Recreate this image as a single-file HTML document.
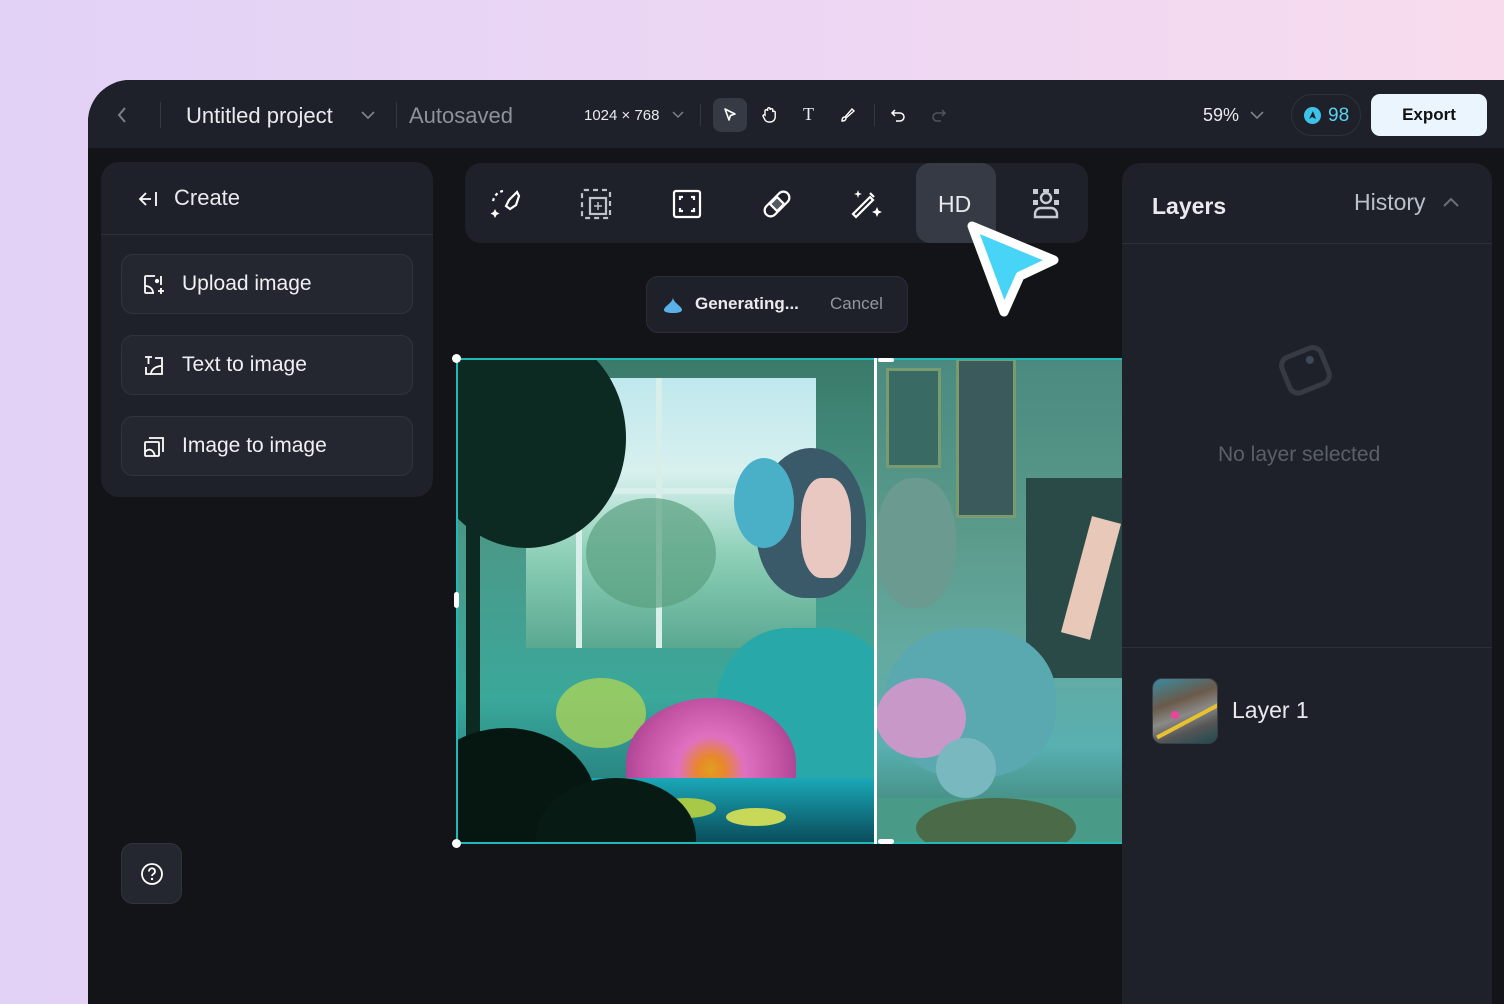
<!DOCTYPE html>
<html><head><meta charset="utf-8"><style>
*{box-sizing:border-box;margin:0;padding:0}
body{width:1504px;height:1004px;overflow:hidden;font-family:"Liberation Sans",sans-serif;background:linear-gradient(90deg,#e2d2f6 0%,#ecd6f4 50%,#f8dcee 100%);position:relative}
.app{position:absolute;left:88px;top:80px;width:1416px;height:924px;background:#131418;border-top-left-radius:42px;overflow:hidden}
.top{position:absolute;left:0;top:0;width:100%;height:68px;background:#1e2129}
.t{position:absolute;color:#e8eaee;white-space:nowrap}
.panel{position:absolute;background:#1e2129;border-radius:18px}
.btn{position:absolute;left:20px;width:292px;height:60px;border:1px solid #30343d;background:#242730;border-radius:12px;color:#eef0f3;font-size:21px;padding-left:60px;line-height:58px}
.btn svg{position:absolute;left:20px;top:18px}
.ico{position:absolute;top:24px}
.a{position:absolute}
</style></head><body>
<div class="app">
 <div class="top">
  <svg style="position:absolute;left:28px;top:26px" width="12" height="18" viewBox="0 0 12 18"><path d="M9 2L3 9l6 7" stroke="#7b808a" stroke-width="2" fill="none"/></svg>
  <div style="position:absolute;left:72px;top:22px;width:1px;height:26px;background:#343842"></div>
  <div class="t" style="left:98px;top:23px;font-size:22px">Untitled project</div>
  <svg style="position:absolute;left:272px;top:30px" width="16" height="10"><path d="M2 2l6 6 6-6" stroke="#7b808a" stroke-width="1.8" fill="none"/></svg>
  <div style="position:absolute;left:308px;top:22px;width:1px;height:26px;background:#343842"></div>
  <div class="t" style="left:321px;top:23px;font-size:22px;color:#8c919b">Autosaved</div>
  <div class="t" style="left:496px;top:27px;font-size:15px">1024 × 768</div>
  <svg style="position:absolute;left:584px;top:31px" width="12" height="8"><path d="M1 1l5 5 5-5" stroke="#7b808a" stroke-width="1.5" fill="none"/></svg>
  <div style="position:absolute;left:612px;top:24px;width:1px;height:22px;background:#343842"></div>
  <div style="position:absolute;left:625px;top:18px;width:34px;height:34px;background:#363a44;border-radius:8px"></div>
  <svg style="position:absolute;left:634px;top:27px" width="16" height="16"><path d="M3 2l10 5-4.5 1.5L7 13z" stroke="#fff" stroke-width="1.6" fill="none" stroke-linejoin="round"/></svg>
  <svg style="position:absolute;left:673px;top:26px" width="16" height="18"><path d="M4 9V5a1.3 1.3 0 012.6 0V3a1.3 1.3 0 012.6 0v1a1.3 1.3 0 012.6 0v2a1.3 1.3 0 012.4 0v5a5 5 0 01-5 5H8a5 5 0 01-4-2l-2-4a1.2 1.2 0 012-1z" stroke="#fff" stroke-width="1.4" fill="none"/></svg>
  <div class="t" style="left:715px;top:24px;font-size:18px;font-family:'Liberation Serif',serif">T</div>
  <svg style="position:absolute;left:752px;top:27px" width="16" height="16"><path d="M2 14c0-3 1-4 3-4l7-8 2 2-8 7c0 2-1 3-4 3z" stroke="#fff" stroke-width="1.4" fill="none"/></svg>
  <div style="position:absolute;left:786px;top:24px;width:1px;height:22px;background:#343842"></div>
  <svg style="position:absolute;left:802px;top:27px" width="18" height="16"><path d="M5 3L2 6l3 3M2 6h8a4 4 0 010 8H6" stroke="#fff" stroke-width="1.5" fill="none"/></svg>
  <svg style="position:absolute;left:841px;top:27px" width="18" height="16"><path d="M13 3l3 3-3 3M16 6H8a4 4 0 000 8h4" stroke="#50545c" stroke-width="1.5" fill="none"/></svg>
  <div class="t" style="left:1115px;top:25px;font-size:18px">59%</div>
  <svg style="position:absolute;left:1162px;top:31px" width="14" height="9"><path d="M1 1l6 6 6-6" stroke="#7b808a" stroke-width="1.6" fill="none"/></svg>
  <div style="position:absolute;left:1203px;top:14px;width:70px;height:42px;border:1px solid #2e323b;border-radius:21px"></div>
  <div style="position:absolute;left:1216px;top:27px;width:17px;height:17px;border-radius:50%;background:#3ec3e8"></div>
  <svg style="position:absolute;left:1219px;top:30px" width="11" height="11"><path d="M6 1L2 9l3-2 4 2z" fill="#1e2129"/></svg>
  <div class="t" style="left:1240px;top:25px;font-size:19px;color:#5bd2f0">98</div>
  <div style="position:absolute;left:1283px;top:14px;width:116px;height:42px;background:#ebf5fd;border-radius:9px;color:#111;font-weight:bold;font-size:17px;text-align:center;line-height:42px">Export</div>
 </div>

 <div class="panel" style="left:13px;top:82px;width:332px;height:335px">
  <svg style="position:absolute;left:36px;top:28px" width="22" height="18"><path d="M9 3L3 9l6 6M3 9h11M19 2v14" stroke="#fff" stroke-width="1.8" fill="none"/></svg>
  <div class="t" style="left:73px;top:23px;font-size:22px">Create</div>
  <div style="position:absolute;left:0;top:72px;width:100%;height:1px;background:#2c3038"></div>
  <div class="btn" style="top:92px"><svg width="24" height="24" viewBox="0 0 24 24" fill="none" stroke="#fff" stroke-width="1.8"><path d="M13 3H4a1 1 0 00-1 1v15a1 1 0 001 1h8M3 13c5 0 8 3 8 7M19 3v9M16 18h6M19 15v6"/><circle cx="15" cy="8" r="1.2"/></svg>Upload image</div>
  <div class="btn" style="top:173px"><svg width="24" height="24" viewBox="0 0 24 24" fill="none" stroke="#fff" stroke-width="1.8"><path d="M3 3h7M6.5 3v7M13 4h7v16H4v-7M9 20c0-4 4-8 11-8"/></svg>Text to image</div>
  <div class="btn" style="top:254px"><svg width="24" height="24" viewBox="0 0 24 24" fill="none" stroke="#fff" stroke-width="1.8"><rect x="3" y="7" width="14" height="14" rx="1"/><path d="M7 3h14v14M3 17c4-4 8-3 10 4"/></svg>Image to image</div>
 </div>
 <div style="position:absolute;left:33px;top:763px;width:61px;height:61px;background:#242730;border:1px solid #30343d;border-radius:12px"></div>
 <svg style="position:absolute;left:52px;top:782px" width="24" height="24"><circle cx="12" cy="12" r="10" stroke="#fff" stroke-width="1.8" fill="none"/><path d="M9 9.5a3 3 0 115 2c-1 .7-2 1.2-2 2.5" stroke="#fff" stroke-width="1.8" fill="none"/><circle cx="12" cy="17" r="1.2" fill="#fff"/></svg>

 <div class="panel" style="left:377px;top:83px;width:623px;height:80px;border-radius:16px">
  <div style="position:absolute;left:451px;top:0;width:80px;height:80px;background:#363a44;border-radius:14px"></div>
  <svg class="ico" style="left:24px" width="34" height="34" viewBox="0 0 34 34" fill="none" stroke="#fff" stroke-width="2.2"><path d="M14 4a12 12 0 00-10 12" stroke-dasharray="3 3"/><path d="M28 5l-8 8-3 6 4 3 6-4 3-9z"/><path d="M6 22l1.5 3 3 1.5-3 1.5L6 31l-1.5-3-3-1.5 3-1.5z" fill="#fff" stroke="none"/></svg>
  <svg class="ico" style="left:114px" width="34" height="34" viewBox="0 0 34 34" fill="none" stroke="#bfc3ca" stroke-width="2.2"><rect x="3" y="3" width="28" height="28" rx="2" stroke-dasharray="5 4"/><rect x="11" y="11" width="16" height="16"/><path d="M19 15v8M15 19h8" stroke-width="1.5"/></svg>
  <svg class="ico" style="left:205px" width="34" height="34" viewBox="0 0 34 34" fill="none" stroke="#fff" stroke-width="2.2"><rect x="4" y="4" width="26" height="26" rx="2"/><path d="M10 13v-3h3M21 10h3v3M24 21v3h-3M13 24h-3v-3"/></svg>
  <svg class="ico" style="left:295px" width="34" height="34" viewBox="0 0 34 34" fill="none" stroke="#fff" stroke-width="2.2"><rect x="2" y="11" width="30" height="12" rx="6" transform="rotate(-45 17 17)"/><rect x="12" y="12" width="10" height="10" transform="rotate(-45 17 17)" fill="#555a64"/></svg>
  <svg class="ico" style="left:385px" width="34" height="34" viewBox="0 0 34 34" fill="none" stroke="#fff" stroke-width="2.2"><path d="M6 30l-3-3 17-17 3 3zM20 6l4 4"/><path d="M8 3l1 3 3 1-3 1-1 3-1-3-3-1 3-1zM27 20l1.5 3.5 3.5 1.5-3.5 1.5L27 30l-1.5-3.5L22 25l3.5-1.5z" fill="#fff" stroke="none"/></svg>
  <div class="t" style="left:473px;top:28px;font-size:23px">HD</div>
  <svg class="ico" style="left:566px" width="30" height="32" viewBox="0 0 30 32" fill="#c8ccd2"><rect x="2" y="2" width="5" height="5"/><rect x="12" y="2" width="6" height="3"/><rect x="23" y="2" width="5" height="5"/><rect x="2" y="13" width="5" height="5"/><rect x="23" y="13" width="5" height="5"/><circle cx="15" cy="11" r="5" fill="none" stroke="#c8ccd2" stroke-width="2.4"/><path d="M4 30v-3a6 6 0 016-6h10a6 6 0 016 6v3z" fill="none" stroke="#c8ccd2" stroke-width="2.4"/></svg>
 </div>

 <div style="position:absolute;left:558px;top:196px;width:262px;height:57px;background:#1e2129;border:1px solid #2a2e36;border-radius:12px">
  <svg style="position:absolute;left:16px;top:19px" width="20" height="18"><path d="M10 1c0 6-9 9-9 13 0 2 4 3 9 3s9-1 9-3c0-4-9-7-9-13z" fill="#5ab0e8"/></svg>
  <div class="t" style="left:48px;top:17px;font-size:17px;font-weight:bold">Generating...</div>
  <div class="t" style="left:183px;top:17px;font-size:17px;color:#9197a1">Cancel</div>
 </div>

 <!-- left image -->
 <div style="position:absolute;left:368px;top:278px;width:420px;height:486px;overflow:hidden;background:linear-gradient(180deg,#3a7a6a 0%,#4a9a8a 40%,#3aa89a 70%,#1a6a70 100%)">
  <div class="a" style="left:70px;top:20px;width:290px;height:270px;background:linear-gradient(180deg,#bfe8ee 0%,#d8f0ee 35%,#8ed0b8 65%,#5aa890 100%)"></div>
  <div class="a" style="left:120px;top:20px;width:6px;height:270px;background:#d8eee8"></div>
  <div class="a" style="left:200px;top:20px;width:6px;height:270px;background:#d8eee8"></div>
  <div class="a" style="left:70px;top:130px;width:260px;height:6px;background:#d8eee8"></div>
  <div class="a" style="left:130px;top:140px;width:130px;height:110px;border-radius:50%;background:#5aa080;opacity:.7"></div>
  <div class="a" style="left:-30px;top:-30px;width:200px;height:220px;border-radius:50%;background:#0c2a22"></div>
  <div class="a" style="left:10px;top:150px;width:14px;height:320px;background:#0c2a22"></div>
  <div class="a" style="left:300px;top:90px;width:110px;height:150px;border-radius:50% 50% 45% 45%;background:#3a5a6a"></div>
  <div class="a" style="left:345px;top:120px;width:50px;height:100px;border-radius:40%;background:#e8c8c0"></div>
  <div class="a" style="left:278px;top:100px;width:60px;height:90px;border-radius:50%;background:#4ab0c8"></div>
  <div class="a" style="left:260px;top:270px;width:180px;height:200px;border-radius:40% 40% 10% 10%;background:#28a8a8"></div>
  <div class="a" style="left:100px;top:320px;width:90px;height:70px;border-radius:50%;background:#b8d850;opacity:.7"></div>
  <div class="a" style="left:170px;top:340px;width:170px;height:130px;border-radius:50% 50% 40% 40%;background:radial-gradient(circle at 50% 55%,#e0a020 0%,#e8882a 12%,#e070c0 30%,#c050a0 65%,#9a3a8a 90%)"></div>
  <div class="a" style="left:0;top:420px;width:420px;height:66px;background:linear-gradient(180deg,#1aa8b8,#0a4a58)"></div>
  <div class="a" style="left:200px;top:440px;width:60px;height:20px;border-radius:50%;background:#a8c848"></div>
  <div class="a" style="left:270px;top:450px;width:60px;height:18px;border-radius:50%;background:#c8d858"></div>
  <div class="a" style="left:-40px;top:370px;width:180px;height:150px;border-radius:50%;background:#061610"></div>
  <div class="a" style="left:80px;top:420px;width:160px;height:120px;border-radius:50%;background:#081a14"></div>
 </div>
 <!-- right image -->
 <div style="position:absolute;left:788px;top:278px;width:246px;height:486px;overflow:hidden;background:linear-gradient(180deg,#4a8a80 0%,#5a9a8a 35%,#64aaa0 60%,#58b0b0 80%,#3a7a6a 100%)">
  <div class="a" style="left:10px;top:10px;width:55px;height:100px;background:#3a6a64;border:3px solid #7a9a70"></div>
  <div class="a" style="left:80px;top:0;width:60px;height:160px;background:#3a5a5c;border:3px solid #7a9a70"></div>
  <div class="a" style="left:150px;top:120px;width:96px;height:200px;background:#2a4a48"></div>
  <div class="a" style="left:0;top:120px;width:80px;height:130px;border-radius:45%;background:#6a9a90"></div>
  <div class="a" style="left:10px;top:270px;width:170px;height:150px;border-radius:45%;background:#5aa8b0"></div>
  <div class="a" style="left:0;top:320px;width:90px;height:80px;border-radius:50%;background:#c898c8"></div>
  <div class="a" style="left:60px;top:380px;width:60px;height:60px;border-radius:50%;background:#7ab8c0"></div>
  <div class="a" style="left:100px;top:440px;width:40px;height:40px;border-radius:50%;background:#c878a8"></div>
  <div class="a" style="left:200px;top:160px;width:30px;height:120px;background:#e8c8b8;transform:rotate(15deg)"></div>
  <div class="a" style="left:0;top:440px;width:246px;height:46px;background:#4a9a88"></div>
  <div class="a" style="left:40px;top:440px;width:160px;height:60px;border-radius:50%;background:#4a6a48"></div>
 </div>
 <div style="position:absolute;left:368px;top:278px;width:666px;height:486px;border:2px solid #21b8b8;border-right:none"></div>
 <div style="position:absolute;left:786px;top:278px;width:3px;height:486px;background:#fff"></div>
 <div style="position:absolute;left:364px;top:274px;width:9px;height:9px;border-radius:50%;background:#fff"></div>
 <div style="position:absolute;left:364px;top:759px;width:9px;height:9px;border-radius:50%;background:#fff"></div>
 <div style="position:absolute;left:366px;top:512px;width:5px;height:16px;border-radius:3px;background:#fff"></div>
 <div style="position:absolute;left:790px;top:759px;width:16px;height:5px;border-radius:3px;background:#fff"></div>
 <div style="position:absolute;left:790px;top:278px;width:16px;height:4px;border-radius:3px;background:#fff"></div>

 <div class="panel" style="left:1034px;top:83px;width:370px;height:860px">
  <div class="t" style="left:30px;top:30px;font-size:23px;font-weight:bold">Layers</div>
  <div class="t" style="left:232px;top:26px;font-size:23px;color:#b9c1cc">History</div>
  <svg style="position:absolute;left:320px;top:34px" width="18" height="11"><path d="M2 9l7-7 7 7" stroke="#6a6f78" stroke-width="2" fill="none"/></svg>
  <div style="position:absolute;left:0;top:80px;width:100%;height:1px;background:#2c3038"></div>
  <svg style="position:absolute;left:146px;top:174px" width="80" height="72"><g transform="rotate(-22 38 32)"><rect x="16" y="14" width="42" height="38" rx="9" stroke="#363a42" stroke-width="5" fill="none"/><circle cx="45" cy="25" r="4" fill="#3a4a5a"/></g></svg>
  <div class="t" style="left:96px;top:280px;font-size:21px;color:#5a5f68">No layer selected</div>
  <div style="position:absolute;left:0;top:484px;width:100%;height:1px;background:#2c3038"></div>
  <div style="position:absolute;left:30px;top:515px;width:66px;height:66px;border-radius:10px;border:1px solid #3a3e46;overflow:hidden;background:linear-gradient(160deg,#3a8aa0 0%,#6a5a4a 35%,#8a8a88 55%,#555 75%,#1e4a52 100%)">
   <div style="position:absolute;left:0;top:40px;width:70px;height:4px;background:#e8c030;transform:rotate(-28deg)"></div>
   <div style="position:absolute;left:18px;top:32px;width:8px;height:8px;border-radius:50%;background:#f040a0"></div>
  </div>
  <div class="t" style="left:110px;top:534px;font-size:23px">Layer 1</div>
 </div>
</div>
<svg style="position:absolute;left:962px;top:218px" width="106" height="104" viewBox="0 0 106 104"><path d="M10 8L92 42 58 58 42 94z" fill="#48d4f6" stroke="#fff" stroke-width="9" stroke-linejoin="round"/></svg>
</body></html>
